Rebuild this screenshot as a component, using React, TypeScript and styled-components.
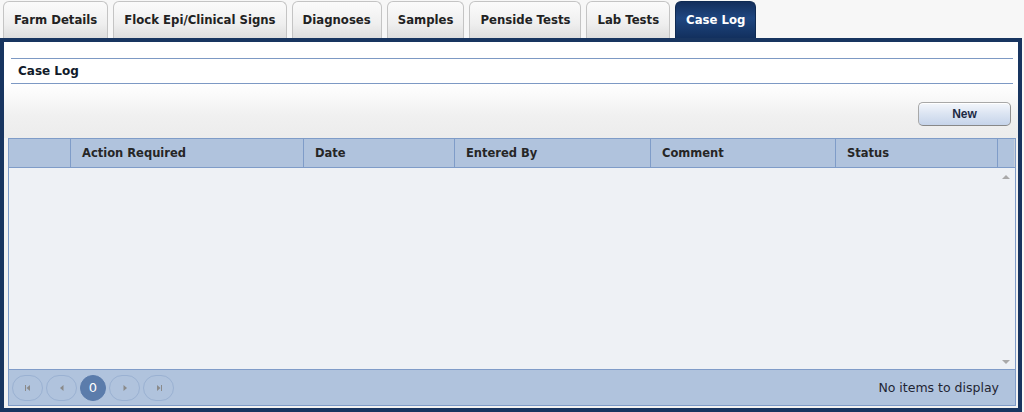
import styled, { createGlobalStyle } from "styled-components";

const GlobalStyle = createGlobalStyle`
  html, body {
    margin: 0;
    padding: 0;
    background: #f7f7f7;
    font-family: "DejaVu Sans", Verdana, sans-serif;
    font-size: 12px;
  }
`;

const tabs = [
  "Farm Details",
  "Flock Epi/Clinical Signs",
  "Diagnoses",
  "Samples",
  "Penside Tests",
  "Lab Tests",
  "Case Log",
];

const columns = [
  { title: "", width: 62 },
  { title: "Action Required", width: 233 },
  { title: "Date", width: 151 },
  { title: "Entered By", width: 196 },
  { title: "Comment", width: 185 },
  { title: "Status", width: 162 },
];

const Page = styled.div`
  width: 1022px;
  height: 412px;
  display: flex;
  flex-direction: column;
`;

const TabStrip = styled.div`
  display: flex;
  gap: 5px;
  padding: 1px 0 0 3px;
  height: 38px;
  box-sizing: border-box;
`;

const Tab = styled.div<{ $active?: boolean }>`
  height: 37px;
  box-sizing: border-box;
  padding: 0 10px;
  display: flex;
  align-items: center;
  font-weight: bold;
  font-size: 11.7px;
  border-radius: 6px 6px 0 0;
  border: 1px solid ${(p) => (p.$active ? "#0f2a52" : "#c4c4c4")};
  border-bottom: none;
  color: ${(p) => (p.$active ? "#ffffff" : "#222222")};
  background: ${(p) =>
    p.$active
      ? "linear-gradient(to bottom, #142f5c 0%, #1f4680 45%, #12305e 100%)"
      : "linear-gradient(to bottom, #fbfbfb 0%, #efefef 60%, #dedede 100%)"};
`;

const Frame = styled.div`
  flex: 1;
  border: 4px solid #183560;
  background: #f2f2f2;
  padding: 0 1px 2px 4px;
  display: flex;
  flex-direction: column;
`;

const SectionHeader = styled.div`
  background: #ffffff;
  padding: 16px 5px 0 7px;
  margin: 0 -1px 0 -4px;
`;

const TitleBar = styled.div`
  border-top: 1px solid #7d99c4;
  border-bottom: 1px solid #7d99c4;
  height: 24px;
  display: flex;
  align-items: center;
  padding-left: 7px;
  font-weight: bold;
  color: #111a2a;
`;

const Toolbar = styled.div`
  height: 54px;
  margin: 0 -1px 0 -4px;
  padding: 0 7px 12px 4px;
  display: flex;
  justify-content: flex-end;
  align-items: flex-end;
  box-sizing: border-box;
  background: linear-gradient(to bottom, #ffffff 0%, #f0f0f0 60%, #ececec 100%);
`;

const NewButton = styled.button`
  width: 93px;
  height: 24px;
  border-radius: 5px;
  border: 1px solid #a8a8a8;
  border-bottom-color: #888;
  border-right-color: #909090;
  background: linear-gradient(to bottom, #f4f7fc 0%, #dbe4f2 50%, #c6d4ea 100%);
  font-family: "Liberation Sans", Arial, sans-serif;
  font-weight: bold;
  font-size: 12px;
  color: #1d2a44;
  box-shadow: inset 0 1px 0 #ffffff;
`;

const Grid = styled.div`
  flex: 1;
  border: 1px solid #7f9cc8;
  display: flex;
  flex-direction: column;
  background: #eef1f5;
  margin-right: 1px;
`;

const HeaderRow = styled.div`
  display: flex;
  height: 28px;
  background: #b0c3dd;
  border-bottom: 1px solid #7f9cc8;
`;

const HeaderCell = styled.div<{ $w: number; $last?: boolean }>`
  width: ${(p) => p.$w}px;
  box-sizing: border-box;
  padding-left: 11px;
  display: flex;
  align-items: center;
  font-weight: bold;
  font-size: 11.5px;
  color: #262626;
  border-right: 1px solid ${(p) => (p.$last ? "#c9cfd8" : "#7f9cc8")};
`;

const Body = styled.div`
  flex: 1;
  display: flex;
  justify-content: flex-end;
`;

const ScrollBar = styled.div`
  width: 19px;
  display: flex;
  flex-direction: column;
  justify-content: space-between;
  align-items: center;
  padding: 7px 0 5px;
`;

const Arrow = styled.span<{ $down?: boolean }>`
  width: 0;
  height: 0;
  border-left: 4px solid transparent;
  border-right: 4px solid transparent;
  ${(p) =>
    p.$down ? "border-top: 4px solid #a9a9a9;" : "border-bottom: 4px solid #a9a9a9;"}
`;

const Pager = styled.div`
  height: 35px;
  background: #b0c3dd;
  border-top: 1px solid #7f9cc8;
  display: flex;
  align-items: center;
  padding: 0 16px 0 3px;
  gap: 3px;
`;

const PageButton = styled.div<{ $current?: boolean }>`
  width: ${(p) => (p.$current ? 26 : 31)}px;
  height: 26px;
  border-radius: 13px;
  box-sizing: border-box;
  border: 1px solid ${(p) => (p.$current ? "#5a7bab" : "#9ab1d2")};
  background: ${(p) => (p.$current ? "#5b7cab" : "transparent")};
  color: #ffffff;
  font-size: 13px;
  display: flex;
  align-items: center;
  justify-content: center;
`;

const Info = styled.div`
  margin-left: auto;
  color: #1f2533;
  font-size: 12.5px;
`;

const Glyph = ({ kind }: { kind: "first" | "prev" | "next" | "last" }) => (
  <svg width="10" height="10" viewBox="0 0 10 10">
    {kind === "first" && (
      <>
        <rect x="2" y="2" width="1" height="6" fill="#8a8a8a" />
        <path d="M7 2 L3.5 5 L7 8 Z" fill="#8a8a8a" />
      </>
    )}
    {kind === "prev" && <path d="M6.5 2 L3 5 L6.5 8 Z" fill="#8a8a8a" />}
    {kind === "next" && <path d="M3.5 2 L7 5 L3.5 8 Z" fill="#8a8a8a" />}
    {kind === "last" && (
      <>
        <path d="M3 2 L6.5 5 L3 8 Z" fill="#8a8a8a" />
        <rect x="7" y="2" width="1" height="6" fill="#8a8a8a" />
      </>
    )}
  </svg>
);

export default function App() {
  return (
    <Page>
      <GlobalStyle />
      <TabStrip>
        {tabs.map((t) => (
          <Tab key={t} $active={t === "Case Log"}>
            {t}
          </Tab>
        ))}
      </TabStrip>
      <Frame>
        <SectionHeader>
          <TitleBar>Case Log</TitleBar>
        </SectionHeader>
        <Toolbar>
          <NewButton>New</NewButton>
        </Toolbar>
        <Grid>
          <HeaderRow>
            {columns.map((c) => (
              <HeaderCell key={c.title || "sel"} $w={c.width}>
                {c.title}
              </HeaderCell>
            ))}
            <HeaderCell $w={17} $last />
          </HeaderRow>
          <Body>
            <ScrollBar>
              <Arrow />
              <Arrow $down />
            </ScrollBar>
          </Body>
          <Pager>
            <PageButton>
              <Glyph kind="first" />
            </PageButton>
            <PageButton>
              <Glyph kind="prev" />
            </PageButton>
            <PageButton $current>0</PageButton>
            <PageButton>
              <Glyph kind="next" />
            </PageButton>
            <PageButton>
              <Glyph kind="last" />
            </PageButton>
            <Info>No items to display</Info>
          </Pager>
        </Grid>
      </Frame>
    </Page>
  );
}
